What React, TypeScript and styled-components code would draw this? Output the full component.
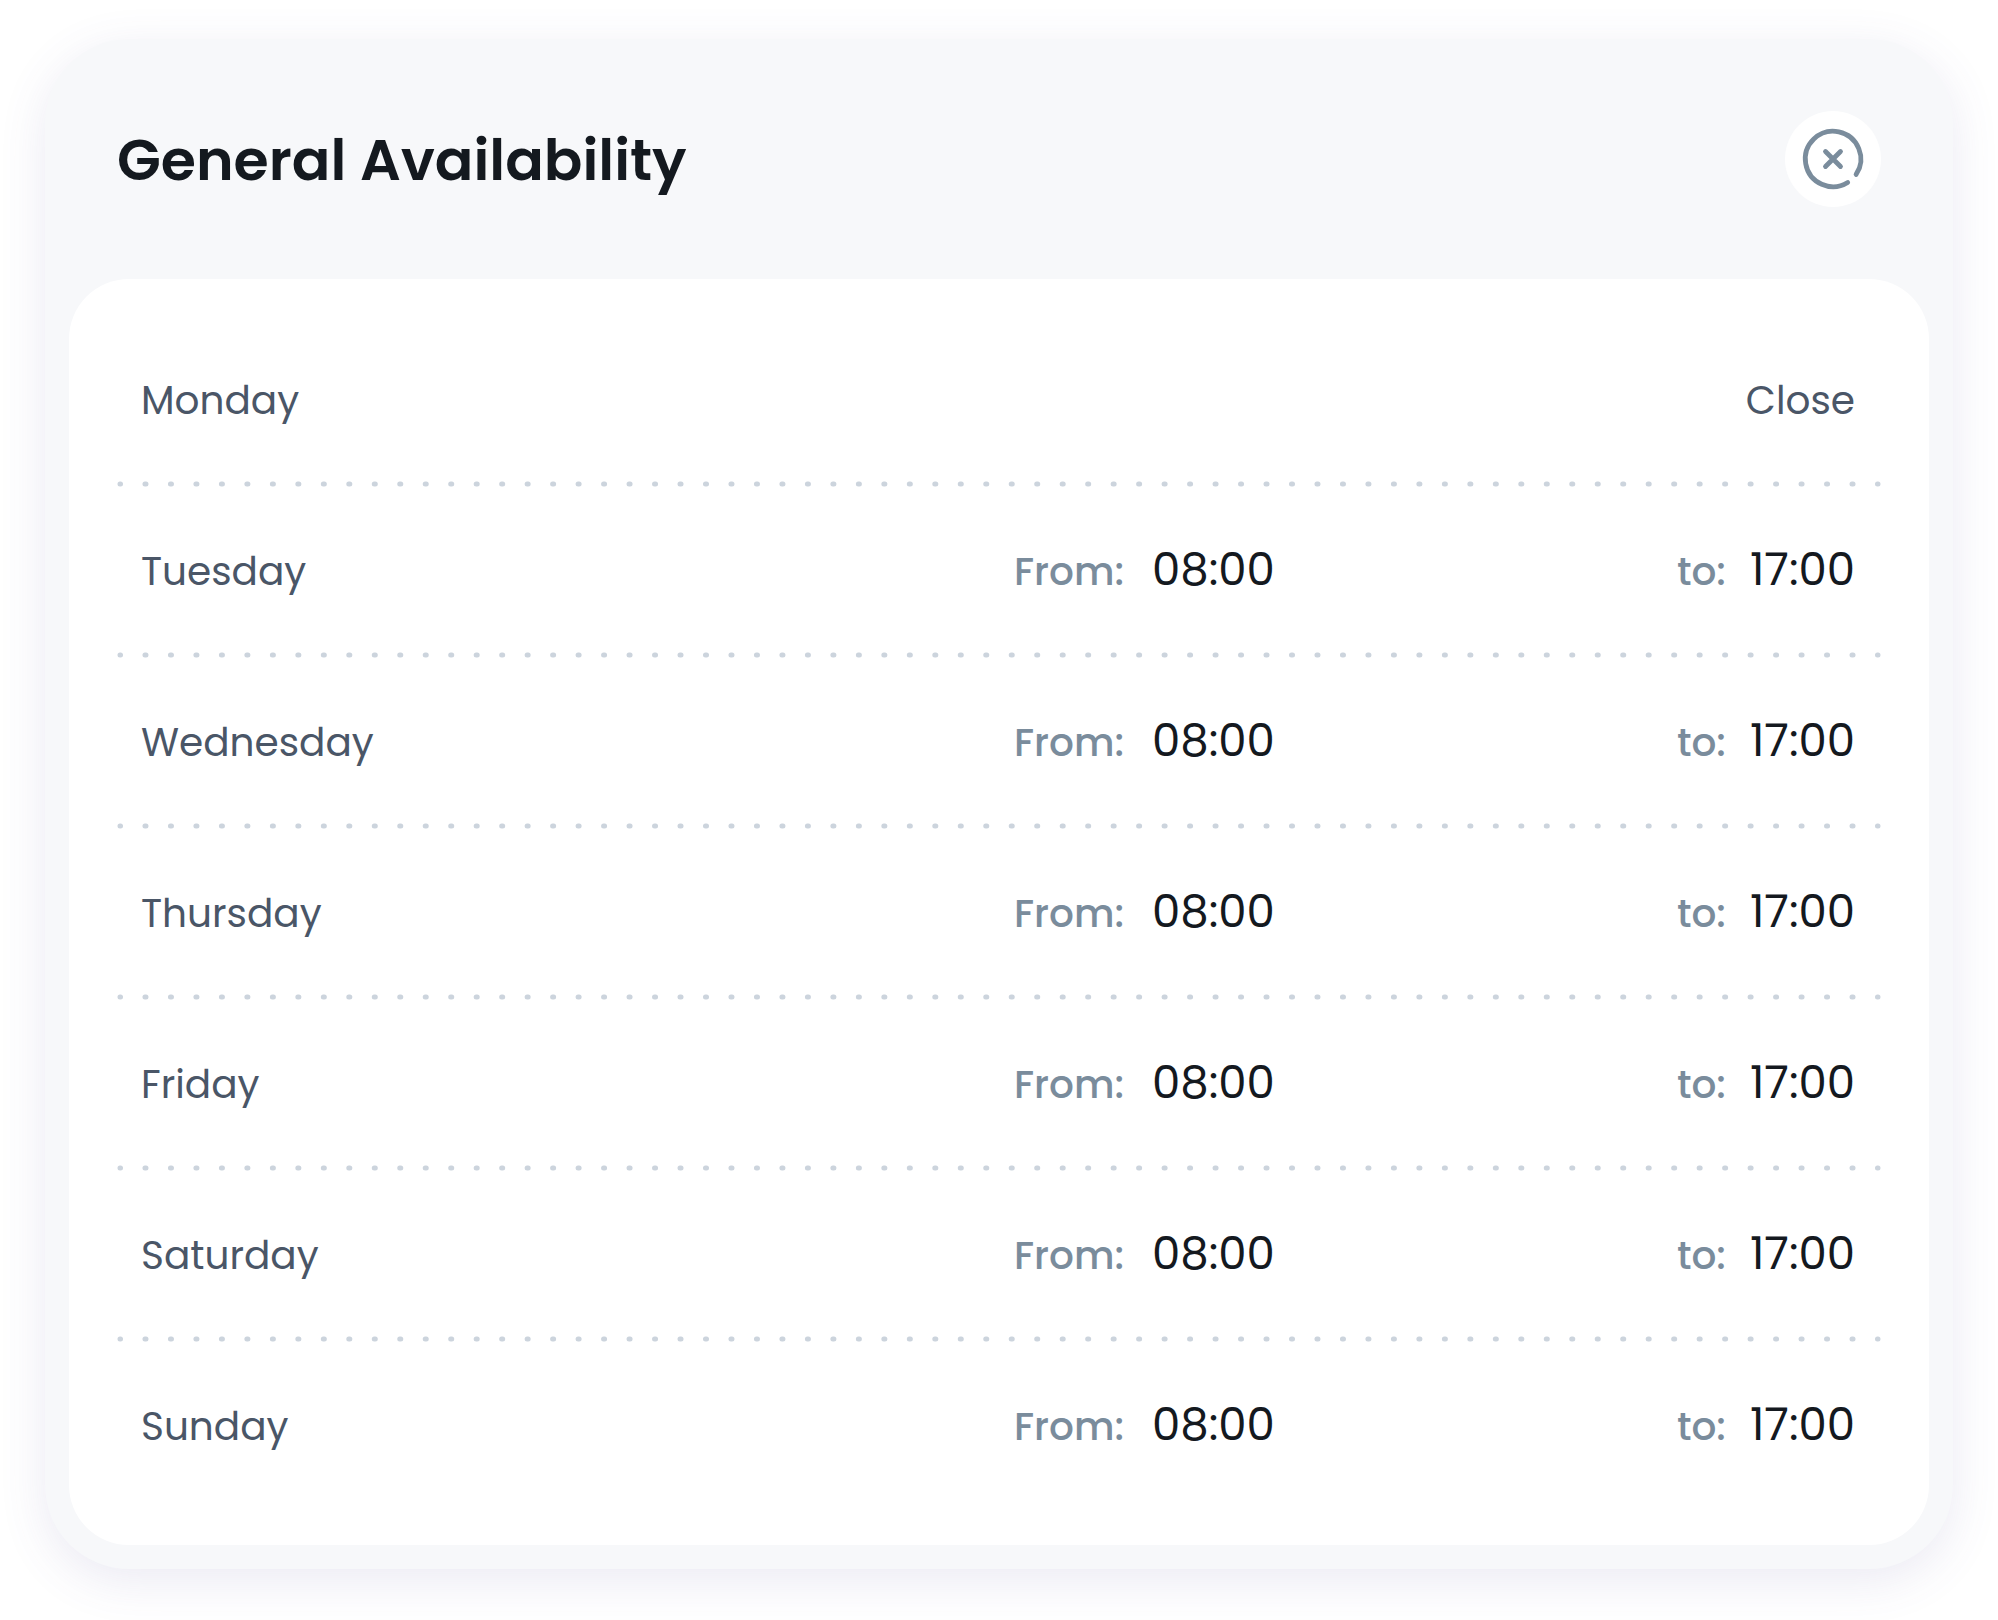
import React, { Fragment } from "react";
import styled, { createGlobalStyle } from "styled-components";

const colors = {
  page: "#ffffff",
  card: "#f7f8fa",
  ink: "#14191f",
  day: "#4a5667",
  muted: "#7a8c9c",
  dot: "#ccd4dd",
};

const GlobalStyle = createGlobalStyle`
  *, *::before, *::after { box-sizing: border-box; }
  body {
    margin: 0;
    background: ${colors.page};
    color: ${colors.ink};
    font-family: Poppins, Inter, "Noto Sans", sans-serif;
    -webkit-font-smoothing: antialiased;
  }
`;

const Page = styled.main`
  padding: 39px 45px 51px;
`;

const Card = styled.section`
  padding: 0 24px 24px;
  border-radius: 84px;
  background: ${colors.card};
  box-shadow: 0 12px 48px rgba(88, 80, 160, 0.12);
`;

const Header = styled.header`
  display: flex;
  align-items: center;
  justify-content: space-between;
  padding: 72px 48px;
`;

const Title = styled.h1`
  margin: 0;
  padding-top: 2px;
  font-size: 57px;
  font-weight: 600;
  line-height: 72px;
`;

const CloseButton = styled.button`
  display: flex;
  align-items: center;
  justify-content: center;
  width: 96px;
  height: 96px;
  padding: 0;
  border: 0;
  border-radius: 50%;
  background: #ffffff;
  color: ${colors.muted};
  cursor: pointer;
`;

const Panel = styled.div`
  padding: 37px 48px 38px;
  border-radius: 60px;
  background: #ffffff;
`;

const Schedule = styled.table`
  width: 100%;
  table-layout: fixed;
  border-collapse: collapse;
`;

const DayColumn = styled.col`
  width: 50%;
`;

const Row = styled.tr`
  height: 165px;
`;

const Day = styled.th`
  padding: 4px 0 0 24px;
  color: ${colors.day};
  font-size: 39px;
  font-weight: 400;
  line-height: 56px;
  text-align: left;
`;

const Cell = styled.td<{ $end?: boolean }>`
  padding: 2px ${(p) => (p.$end ? "26px 0 0" : "0 0 15px")};
  font-size: 39px;
  line-height: 56px;
  text-align: ${(p) => (p.$end ? "right" : "left")};
`;

const ClosedCell = styled(Cell)`
  padding-top: 4px;
  color: ${colors.day};
`;

const Label = styled.span<{ $gap: number }>`
  margin-right: ${(p) => p.$gap}px;
  color: ${colors.muted};
  font-weight: 500;
`;

const Time = styled.time`
  font-size: 45px;
`;

const DividerCell = styled.td`
  height: 6px;
  padding: 0 3px;
`;

const Dots = styled.svg`
  display: block;
  width: 100%;
  height: 6px;
  overflow: visible;
`;

const Divider = () => (
  <tr aria-hidden="true">
    <DividerCell colSpan={3}>
      <Dots>
        <line
          x1="0"
          y1="3"
          x2="100%"
          y2="3"
          pathLength={69}
          stroke={colors.dot}
          strokeWidth="5"
          strokeLinecap="round"
          strokeDasharray="0.04 0.96"
          strokeDashoffset="0.02"
        />
      </Dots>
    </DividerCell>
  </tr>
);

const CloseIcon = () => (
  <svg
    width="72"
    height="72"
    viewBox="0 0 24 24"
    fill="none"
    stroke="currentColor"
    strokeWidth="1.6"
    strokeLinecap="round"
    aria-hidden="true"
  >
    <path d="M16.9 19.85A9.25 9.25 0 1 1 19.7 17.15" />
    <path d="M9.5 9.5l5 5M14.5 9.5l-5 5" />
  </svg>
);

type DayHours = { day: string; from?: string; to?: string };

const hours: DayHours[] = [
  { day: "Monday" },
  { day: "Tuesday", from: "08:00", to: "17:00" },
  { day: "Wednesday", from: "08:00", to: "17:00" },
  { day: "Thursday", from: "08:00", to: "17:00" },
  { day: "Friday", from: "08:00", to: "17:00" },
  { day: "Saturday", from: "08:00", to: "17:00" },
  { day: "Sunday", from: "08:00", to: "17:00" },
];

export default function App() {
  return (
    <>
      <GlobalStyle />
      <Page>
        <Card aria-labelledby="availability-title">
          <Header>
            <Title id="availability-title">General Availability</Title>
            <CloseButton type="button" aria-label="Close">
              <CloseIcon />
            </CloseButton>
          </Header>
          <Panel>
            <Schedule aria-labelledby="availability-title">
              <colgroup>
                <DayColumn />
                <col />
                <col />
              </colgroup>
              <tbody>
                {hours.map(({ day, from, to }, index) => (
                  <Fragment key={day}>
                    {index > 0 && <Divider />}
                    <Row>
                      <Day scope="row">{day}</Day>
                      {from && to ? (
                        <>
                          <Cell>
                            <Label $gap={28}>From:</Label>
                            <Time>{from}</Time>
                          </Cell>
                          <Cell $end>
                            <Label $gap={24}>to:</Label>
                            <Time>{to}</Time>
                          </Cell>
                        </>
                      ) : (
                        <ClosedCell $end colSpan={2}>
                          Close
                        </ClosedCell>
                      )}
                    </Row>
                  </Fragment>
                ))}
              </tbody>
            </Schedule>
          </Panel>
        </Card>
      </Page>
    </>
  );
}
